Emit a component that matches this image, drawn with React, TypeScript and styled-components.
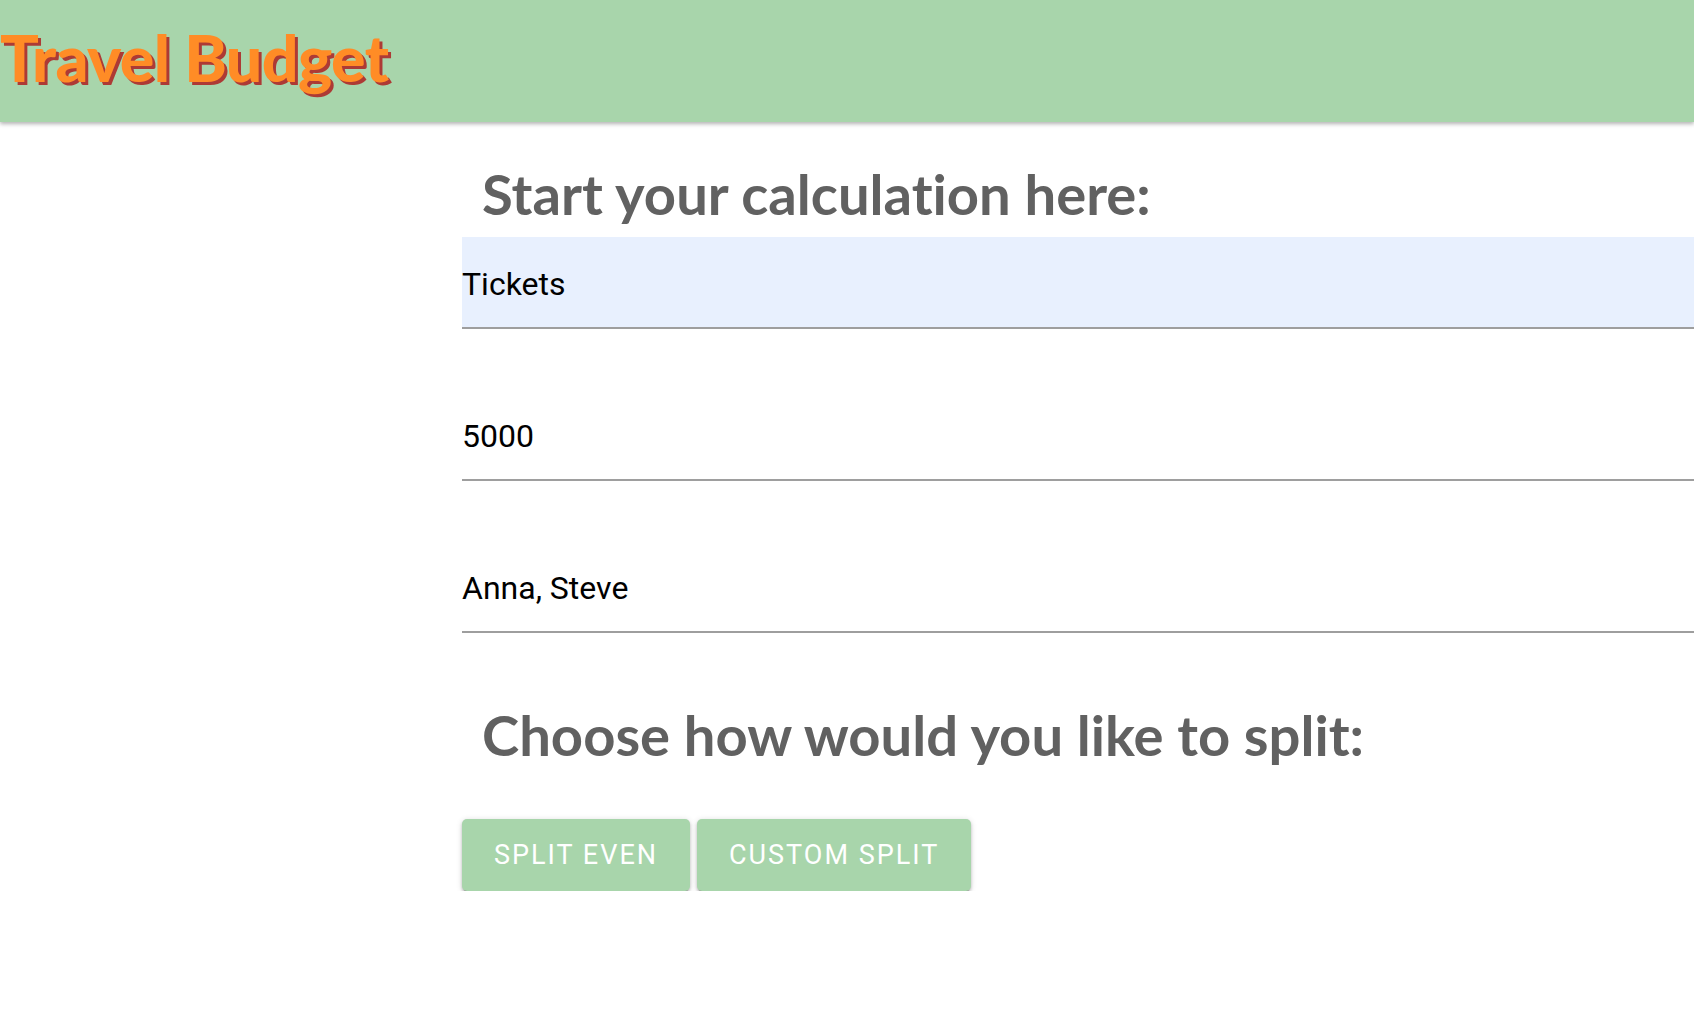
import React from "react";
import styled, { createGlobalStyle } from "styled-components";

const Global = createGlobalStyle`
  html, body { margin: 0; padding: 0; background: #ffffff; }
  body { font-family: Roboto, "Liberation Sans", sans-serif; overflow: hidden; }
  * { box-sizing: border-box; }
`;

const Header = styled.header`
  height: 122px;
  background: #a8d5ab;
  box-shadow: 0 2px 4px rgba(0, 0, 0, 0.3);
  display: flex;
  align-items: center;
  position: relative;
  z-index: 1;
`;

const Title = styled.h1`
  margin: 0;
  padding-bottom: 8px;
  font-family: Lato, "Liberation Sans", sans-serif;
  font-weight: 900;
  font-size: 64.5px;
  letter-spacing: -0.6px;
  color: #ff8c26;
  text-shadow: 3px 3px 0 #ad3a35;
  font-variant-ligatures: none;
`;

const Page = styled.main`
  display: grid;
  grid-template-columns: 462px 1fr;
`;

const Form = styled.section`
  grid-column: 2;
  display: flex;
  flex-direction: column;
`;

const Heading = styled.h2<{ $top: number; $bottom: number }>`
  margin: ${(p) => p.$top}px 0 ${(p) => p.$bottom}px;
  padding-left: 20px;
  font-family: Lato, "Liberation Sans", sans-serif;
  font-weight: 700;
  font-size: 56.2px;
  line-height: 64px;
  color: #616161;
  font-variant-ligatures: none;
`;

const Field = styled.input<{ $filled?: boolean }>`
  display: block;
  width: 100%;
  height: 92px;
  margin: 0 0 60px;
  padding: 4px 0 0;
  border: none;
  border-bottom: 2px solid #9e9e9e;
  border-radius: 0;
  background: ${(p) => (p.$filled ? "#e8f0fe" : "transparent")};
  font-family: Roboto, "Liberation Sans", sans-serif;
  font-size: 32px;
  color: #000;
  outline: none;
`;

const Buttons = styled.div`
  display: flex;
  gap: 7px;
  margin-top: 52px;
`;

const Button = styled.button`
  height: 72px;
  padding: 0 32px;
  border: none;
  border-radius: 5px;
  background: #a8d5ab;
  color: #ffffff;
  font-family: Roboto, "Liberation Sans", sans-serif;
  font-size: 27px;
  font-weight: 400;
  letter-spacing: 2px;
  text-transform: uppercase;
  box-shadow: 0 3px 1px -2px rgba(0, 0, 0, 0.25), 0 2px 3px 0 rgba(0, 0, 0, 0.2),
    0 1px 6px 0 rgba(0, 0, 0, 0.14);
  cursor: pointer;
`;

export default function App() {
  return (
    <>
      <Global />
      <Header>
        <Title>Travel Budget</Title>
      </Header>
      <Page>
        <Form>
          <Heading $top={40} $bottom={11}>Start your calculation here:</Heading>
          <Field $filled defaultValue="Tickets" />
          <Field defaultValue="5000" />
          <Field defaultValue="Anna, Steve" />
          <Heading $top={10} $bottom={0}>Choose how would you like to split:</Heading>
          <Buttons>
            <Button>Split even</Button>
            <Button>Custom split</Button>
          </Buttons>
        </Form>
      </Page>
    </>
  );
}
